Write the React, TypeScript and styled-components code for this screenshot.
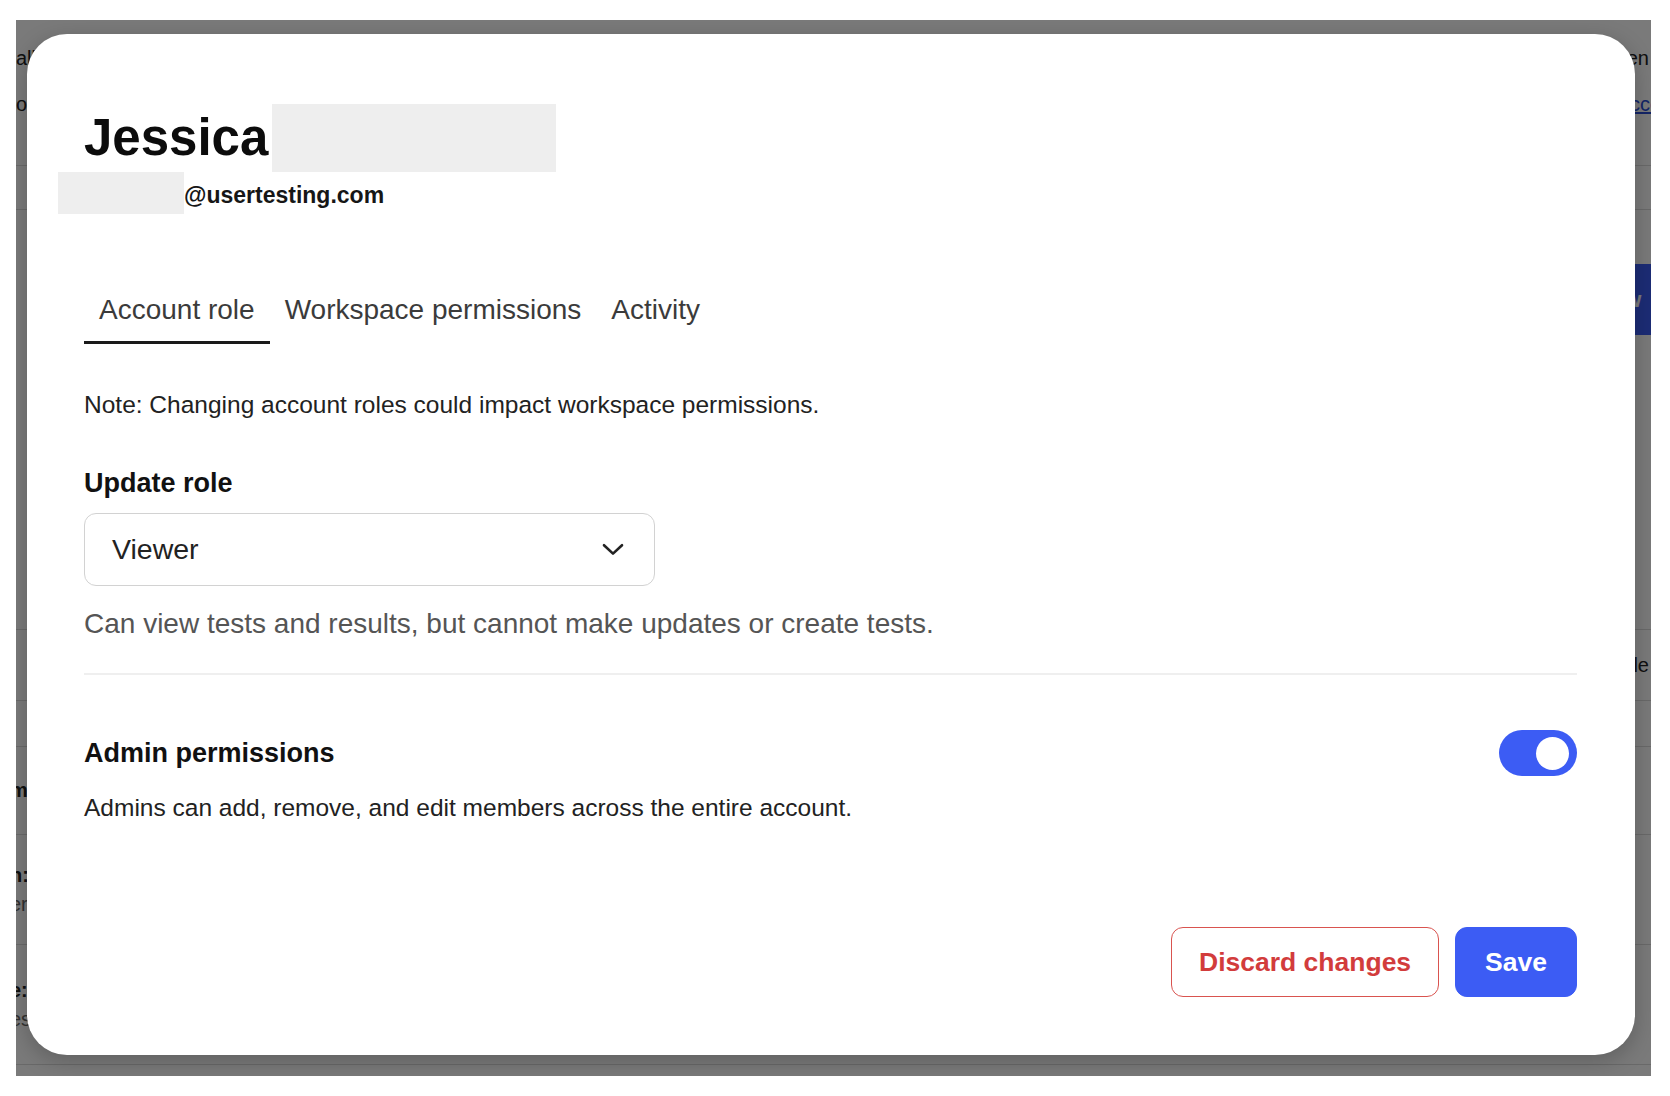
import React, { useState } from "react";
import styled, { createGlobalStyle } from "styled-components";

const GlobalStyle = createGlobalStyle`
  * { box-sizing: border-box; }
  body {
    margin: 0;
    background: #fff;
    font-family: "Liberation Sans", Arial, sans-serif;
    color: #1f1f1f;
  }
`;

const FONT = `"Liberation Sans", Arial, sans-serif`;

// page frame with the members page underneath the dialog
const Stage = styled.div`
  position: relative;
  margin: 20px 0 0 16px;
  width: 1635px;
  height: 1056px;
  overflow: hidden;
  background: #fff;
`;

const Underlay = styled.div`
  display: flex;
  flex-direction: column;
  font-family: ${FONT};
  font-size: 20px;
  color: #222;
`;

const PageHead = styled.div`
  height: 146px;
  display: flex;
  flex-direction: column;
  padding-top: 26px;
  gap: 22px;
  border-bottom: 1px solid #dcdcdc;
`;

const HeadLine = styled.div`
  display: flex;
  justify-content: space-between;
  align-items: baseline;
  line-height: 24px;
`;

const HeadEnd = styled.span`
  margin-right: 2px;
`;

const PageLink = styled.span`
  color: #2b4fd8;
  text-decoration: underline;
  margin-right: -30px;
`;

const SubHead = styled.div`
  height: 44px;
  border-bottom: 1px solid #dcdcdc;
`;

const ActionBar = styled.div`
  height: 420px;
  display: flex;
  justify-content: flex-end;
  align-items: flex-start;
  padding-top: 54px;
  border-bottom: 1px solid #dcdcdc;
`;

const NewButton = styled.div`
  height: 71px;
  width: 260px;
  margin-right: -100px;
  background: #3c5cf4;
  color: #fff;
  font-weight: 700;
  font-size: 22px;
  display: flex;
  align-items: center;
  padding-left: 44px;
`;

const MemberRow = styled.div<{ $h: number }>`
  height: ${(p) => p.$h}px;
  display: flex;
  justify-content: space-between;
  align-items: center;
  border-bottom: 1px solid #dcdcdc;
`;

const MemberName = styled.div`
  display: flex;
  flex-direction: column;
  gap: 6px;
  margin-left: -6px;
  b { font-weight: 700; }
  span { color: #666; }
`;

const RoleCell = styled.div`
  margin-right: 2px;
`;

const Scrim = styled.div`
  position: absolute;
  inset: 0;
  background: rgba(0, 0, 0, 0.52);
`;

const Dialog = styled.div`
  position: absolute;
  left: 11px;
  top: 14px;
  width: 1608px;
  background: #fff;
  border-radius: 40px;
  padding: 70px 58px 58px 57px;
  box-shadow: 0 6px 22px rgba(0, 0, 0, 0.22);
  display: flex;
  flex-direction: column;
  font-family: ${FONT};
`;

const NameRow = styled.div`
  display: flex;
  height: 68px;
`;

const Name = styled.h1`
  margin: 0;
  font-size: 51px;
  line-height: 68px;
  font-weight: 700;
  color: #0c0c0c;
`;

const Redacted = styled.span<{ $w: number; $h: number; $shift?: number }>`
  display: block;
  width: ${(p) => p.$w}px;
  height: ${(p) => p.$h}px;
  margin-left: ${(p) => p.$shift ?? 0}px;
  background: #eeeeee;
`;

const EmailRow = styled.div`
  display: flex;
  height: 42px;
`;

const Email = styled.span`
  font-size: 23px;
  font-weight: 700;
  line-height: 37px;
  padding-top: 5px;
  color: #161616;
`;

const TabList = styled.div`
  display: flex;
  margin-top: 80px;
`;

const Tab = styled.button<{ $active?: boolean }>`
  all: unset;
  cursor: pointer;
  padding: 0 15px 15px;
  font-family: ${FONT};
  font-size: 28px;
  line-height: 32px;
  color: #3b3b3b;
  border-bottom: 3px solid ${(p) => (p.$active ? "#1a1a1a" : "transparent")};
`;

const Note = styled.p`
  margin: 46px 0 0;
  font-size: 24.5px;
  line-height: 30px;
  color: #222;
`;

const Label = styled.div<{ $gap?: number }>`
  margin-top: ${(p) => p.$gap ?? 0}px;
  font-size: 27px;
  line-height: 32px;
  font-weight: 700;
  color: #111;
`;

const Select = styled.div`
  margin-top: 14px;
  width: 571px;
  height: 73px;
  border: 1.5px solid #d2d2d2;
  border-radius: 12px;
  display: flex;
  align-items: center;
  justify-content: space-between;
  padding: 0 30px 0 27px;
  font-size: 28.5px;
  color: #222;
  cursor: pointer;
`;

const Hint = styled.p`
  margin: 22px 0 0;
  font-size: 28px;
  line-height: 32px;
  color: #555;
`;

const Divider = styled.hr`
  margin: 33px 0 0;
  border: none;
  height: 2px;
  background: #efefef;
`;

const ToggleRow = styled.div`
  margin-top: 55px;
  height: 46px;
  display: flex;
  align-items: center;
  justify-content: space-between;
`;

const Switch = styled.button<{ $on: boolean }>`
  all: unset;
  box-sizing: border-box;
  cursor: pointer;
  width: 78px;
  height: 46px;
  border-radius: 23px;
  background: ${(p) => (p.$on ? "#3c5cf4" : "#c9c9c9")};
  display: flex;
  align-items: center;
  justify-content: ${(p) => (p.$on ? "flex-end" : "flex-start")};
  padding: 0 8px;
`;

const Knob = styled.span`
  width: 33px;
  height: 33px;
  border-radius: 50%;
  background: #fff;
`;

const SubText = styled.p`
  margin: 17px 0 0;
  font-size: 24.5px;
  line-height: 30px;
  color: #222;
`;

const Footer = styled.div`
  margin-top: 104px;
  display: flex;
  justify-content: flex-end;
  gap: 16px;
`;

const Button = styled.button<{ $variant: "danger" | "primary" }>`
  height: 70px;
  padding: 0 ${(p) => (p.$variant === "primary" ? 29 : 27)}px;
  border-radius: 12px;
  font-family: ${FONT};
  font-size: 26.5px;
  font-weight: 700;
  cursor: pointer;
  border: 1.5px solid ${(p) => (p.$variant === "primary" ? "#3c5cf4" : "#d9534f")};
  background: ${(p) => (p.$variant === "primary" ? "#3c5cf4" : "#fff")};
  color: ${(p) => (p.$variant === "primary" ? "#fff" : "#d23c3c")};
`;

const Chevron = () => (
  <svg width="22" height="13" viewBox="0 0 22 13" fill="none">
    <path d="M2 2.2 L11 10.6 L20 2.2" stroke="#222" strokeWidth="2.6" strokeLinecap="round" strokeLinejoin="round" />
  </svg>
);

const tabs = ["Account role", "Workspace permissions", "Activity"];

const members = [
  { h: 71, name: "", mail: "", role: "Role" },
  { h: 46, name: "", mail: "", role: "" },
  { h: 88, name: "mara", mail: "", role: "" },
  { h: 110, name: "n: Owen", mail: "er@usertesting.com", role: "" },
  { h: 120, name: "e: Lee", mail: "es@usertesting.com", role: "" },
];

export default function App() {
  const [active, setActive] = useState(0);
  const [admin, setAdmin] = useState(true);

  return (
    <>
      <GlobalStyle />
      <Stage>
        <Underlay aria-hidden>
          <PageHead>
            <HeadLine>
              <span>all</span>
              <HeadEnd>Open</HeadEnd>
            </HeadLine>
            <HeadLine>
              <span>our</span>
              <PageLink>Manage access</PageLink>
            </HeadLine>
          </PageHead>
          <SubHead />
          <ActionBar>
            <NewButton>Invite new</NewButton>
          </ActionBar>
          {members.map((m, i) => (
            <MemberRow key={i} $h={m.h}>
              <MemberName>
                <b>{m.name}</b>
                {m.mail && <span>{m.mail}</span>}
              </MemberName>
              <RoleCell>{m.role}</RoleCell>
            </MemberRow>
          ))}
        </Underlay>
        <Scrim />

        <Dialog role="dialog">
          <NameRow>
            <Name>Jessica</Name>
            <Redacted $w={284} $h={68} $shift={4} />
          </NameRow>
          <EmailRow>
            <Redacted $w={126} $h={42} $shift={-26} />
            <Email>@usertesting.com</Email>
          </EmailRow>

          <TabList>
            {tabs.map((t, i) => (
              <Tab key={t} $active={i === active} onClick={() => setActive(i)}>
                {t}
              </Tab>
            ))}
          </TabList>

          <Note>Note: Changing account roles could impact workspace permissions.</Note>

          <Label $gap={47}>Update role</Label>
          <Select>
            <span>Viewer</span>
            <Chevron />
          </Select>
          <Hint>Can view tests and results, but cannot make updates or create tests.</Hint>

          <Divider />

          <ToggleRow>
            <Label>Admin permissions</Label>
            <Switch $on={admin} onClick={() => setAdmin(!admin)}>
              <Knob />
            </Switch>
          </ToggleRow>
          <SubText>Admins can add, remove, and edit members across the entire account.</SubText>

          <Footer>
            <Button $variant="danger">Discard changes</Button>
            <Button $variant="primary">Save</Button>
          </Footer>
        </Dialog>
      </Stage>
    </>
  );
}
